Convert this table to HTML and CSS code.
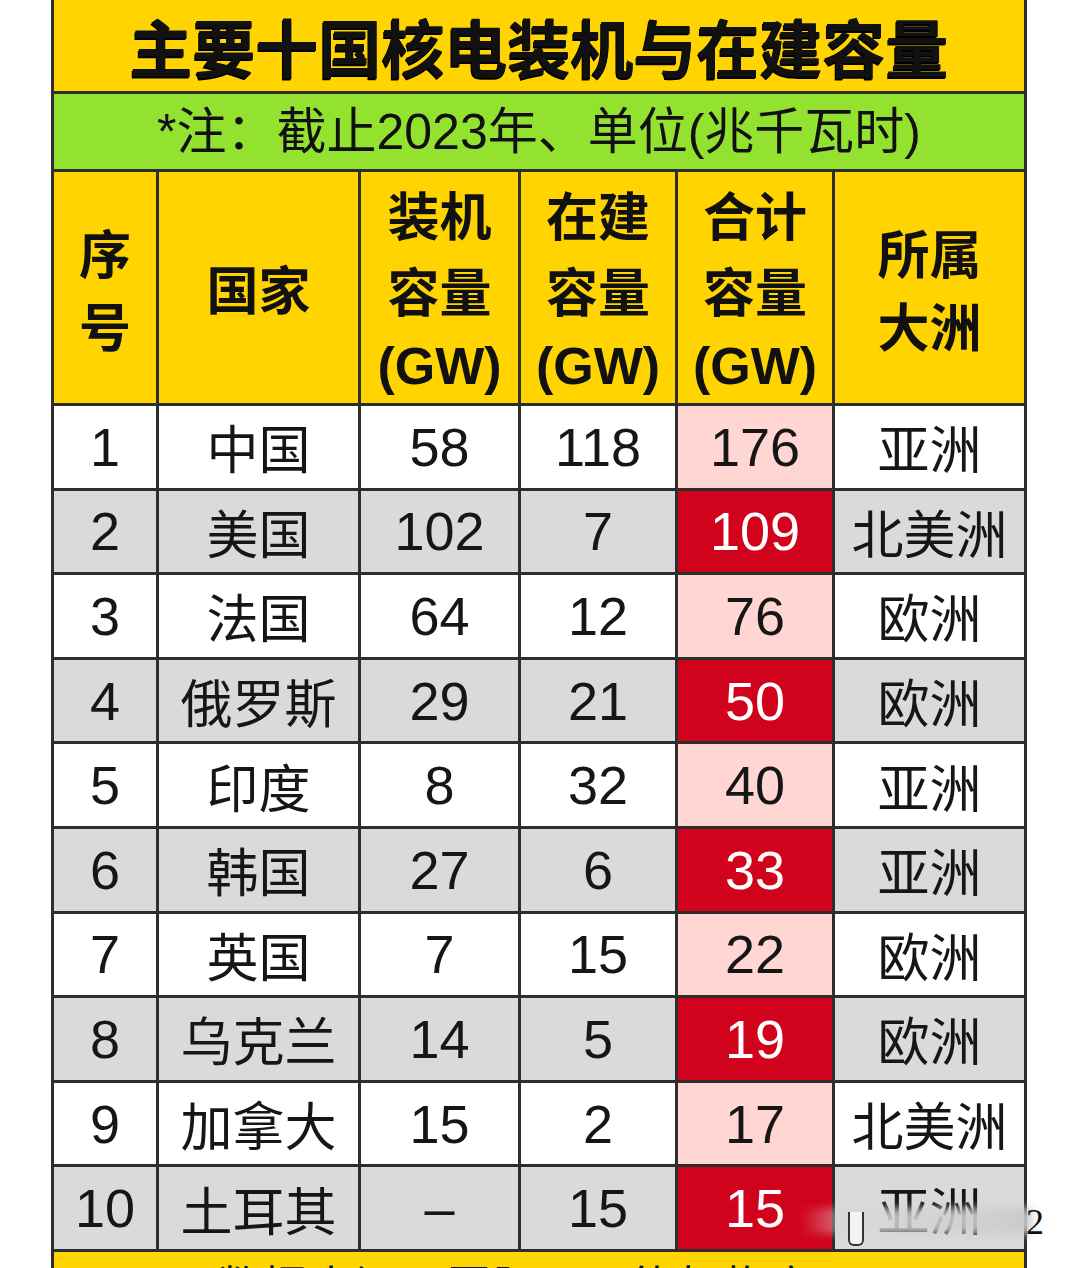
FILE: index.html
```html
<!DOCTYPE html>
<html lang="zh-CN">
<head>
<meta charset="utf-8">
<title>主要十国核电装机与在建容量</title>
<link rel="stylesheet" href="styles.css">
</head>
<body>
<div class="page">
  <div class="sheet">
    <div class="title">主要十国核电装机与在建容量</div>
    <div class="note">*注：截止2023年、单位(兆千瓦时)</div>

    <div class="hd"><span>序</span><span>号</span></div>
    <div class="hd"><span>国家</span></div>
    <div class="hd hd3"><span>装机</span><span>容量</span><span class="gw">(GW)</span></div>
    <div class="hd hd3"><span>在建</span><span>容量</span><span class="gw">(GW)</span></div>
    <div class="hd hd3"><span>合计</span><span>容量</span><span class="gw">(GW)</span></div>
    <div class="hd"><span>所属</span><span>大洲</span></div>

    <div class="c num">1</div><div class="c cn">中国</div><div class="c num">58</div><div class="c num">118</div><div class="c num pink">176</div><div class="c cn">亚洲</div>
    <div class="c g num">2</div><div class="c g cn">美国</div><div class="c g num">102</div><div class="c g num">7</div><div class="c num red">109</div><div class="c g cn">北美洲</div>
    <div class="c num">3</div><div class="c cn">法国</div><div class="c num">64</div><div class="c num">12</div><div class="c num pink">76</div><div class="c cn">欧洲</div>
    <div class="c g num">4</div><div class="c g cn">俄罗斯</div><div class="c g num">29</div><div class="c g num">21</div><div class="c num red">50</div><div class="c g cn">欧洲</div>
    <div class="c num">5</div><div class="c cn">印度</div><div class="c num">8</div><div class="c num">32</div><div class="c num pink">40</div><div class="c cn">亚洲</div>
    <div class="c g num">6</div><div class="c g cn">韩国</div><div class="c g num">27</div><div class="c g num">6</div><div class="c num red">33</div><div class="c g cn">亚洲</div>
    <div class="c num">7</div><div class="c cn">英国</div><div class="c num">7</div><div class="c num">15</div><div class="c num pink">22</div><div class="c cn">欧洲</div>
    <div class="c g num">8</div><div class="c g cn">乌克兰</div><div class="c g num">14</div><div class="c g num">5</div><div class="c num red">19</div><div class="c g cn">欧洲</div>
    <div class="c num">9</div><div class="c cn">加拿大</div><div class="c num">15</div><div class="c num">2</div><div class="c num pink">17</div><div class="c cn">北美洲</div>
    <div class="c g num">10</div><div class="c g cn">土耳其</div><div class="c g num">–</div><div class="c g num">15</div><div class="c num red">15</div><div class="c g cn">亚洲</div>

    <div class="foot">数据来源：国际原子能机构官网</div>
  </div>
  <div class="wm"><span class="wm-bar"></span><span class="wm-u"></span><span class="wm-num">2</span></div>
</div>
</body>
</html>
```

FILE: styles.css
```css
html, body {
  margin: 0;
  padding: 0;
  background: #ffffff;
}
body {
  font-family: "Liberation Sans", "Noto Sans CJK SC", sans-serif;
  color: #111;
  overflow: hidden;
  height: 1268px;
}
.page {
  position: relative;
  width: 1068px;
  height: 1268px;
  overflow: hidden;
}
.sheet {
  margin-left: 51px;
  width: 976px;
  box-sizing: border-box;
  display: grid;
  grid-template-columns: 102px 199px 157px 154px 154px 189px;
  column-gap: 3px;
  row-gap: 3px;
  padding: 0 3px;
  background: #2e2e2e;
}
.title {
  grid-column: 1 / -1;
  height: 91px;
  background: #ffd400;
  display: flex;
  align-items: center;
  justify-content: center;
  font-family: "Noto Sans CJK SC", sans-serif;
  font-weight: 700;
  font-size: 63px;
  line-height: 70px;
  color: #111;
  text-shadow: -1px 2px 0 #000, 0 1px 0 #000;
  padding-bottom: 2px;
  box-sizing: border-box;
}
.note {
  grid-column: 1 / -1;
  height: 75px;
  background: #93e230;
  display: flex;
  align-items: center;
  justify-content: center;
  font-family: "Liberation Sans", "Noto Sans CJK SC", sans-serif;
  font-size: 50px;
  line-height: 60px;
  color: #111;
}
.hd {
  height: 231px;
  background: #ffd400;
  display: flex;
  flex-direction: column;
  align-items: center;
  justify-content: center;
  font-family: "Noto Sans CJK SC", sans-serif;
  font-weight: 700;
  font-size: 52px;
  line-height: 73px;
  color: #111;
}
.hd3 {
  line-height: 76px;
  padding-top: 4px;
  box-sizing: border-box;
}
.gw {
  font-family: "Liberation Sans", sans-serif;
  font-weight: 700;
  font-size: 52px;
}
.c {
  height: 81.6px;
  background: #ffffff;
  display: flex;
  align-items: center;
  justify-content: center;
  color: #161616;
}
.num {
  font-family: "Liberation Sans", sans-serif;
  font-size: 54px;
}
.cn {
  font-family: "Noto Sans CJK SC", sans-serif;
  font-size: 52px;
}
.g {
  background: #d8dadb;
}
.pink {
  background: #ffd6d1;
}
.red {
  background: #d1031c;
  color: #ffffff;
}
.foot {
  grid-column: 1 / -1;
  height: 70px;
  background: #ffd400;
  display: flex;
  justify-content: center;
  padding-top: 4px;
  box-sizing: border-box;
  font-family: "Noto Sans CJK SC", sans-serif;
  font-size: 44px;
  line-height: 56px;
  letter-spacing: 2px;
  color: #111;
}
.wm {
  position: absolute;
  left: 790px;
  top: 1196px;
  width: 270px;
  height: 60px;
}
.wm-bar {
  position: absolute;
  left: 10px;
  top: 12px;
  width: 232px;
  height: 26px;
  background: linear-gradient(90deg, rgba(225,225,225,0) 0%, rgba(215,215,215,0.85) 30%, rgba(205,205,205,0.9) 85%, rgba(200,200,200,0.95) 100%);
  filter: blur(4px);
}
.wm-u {
  position: absolute;
  left: 58px;
  top: 16px;
  width: 12px;
  height: 32px;
  border: 2px solid #333;
  border-top: none;
  border-radius: 0 0 6px 6px;
  background: #f4f4f4;
}
.wm-num {
  position: absolute;
  left: 236px;
  top: 6px;
  font-family: "Liberation Serif", serif;
  font-size: 36px;
  line-height: 40px;
  color: #111;
}
```
